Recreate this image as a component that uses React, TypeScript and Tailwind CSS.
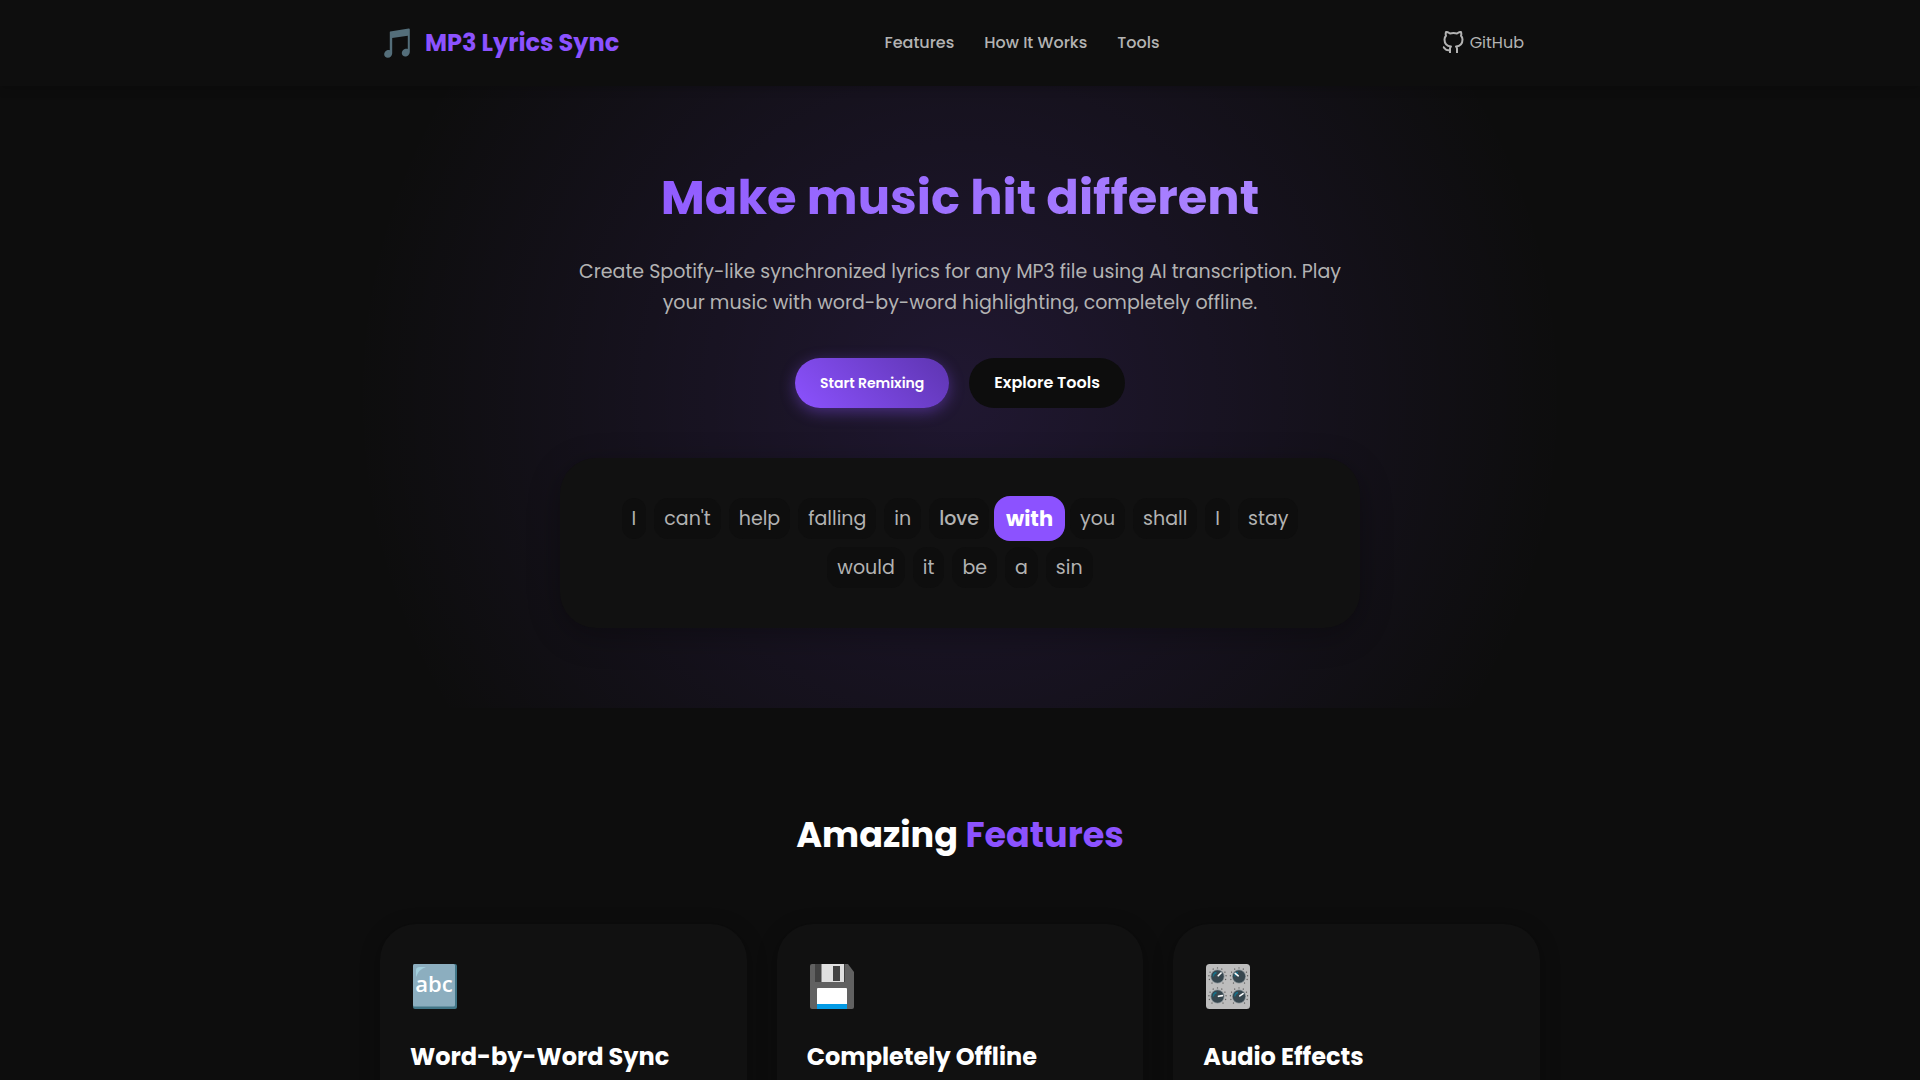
import React from "react";

const navLinks = [
  { label: "Features", href: "#features" },
  { label: "How It Works", href: "#how" },
  { label: "Tools", href: "#tools" },
];

const lyrics = "I can't help falling in love with you shall I stay would it be a sin".split(" ");
const activeWord = 6;

function NoteIcon() {
  return (
    <svg className="h-[30px] w-[30px] shrink-0" viewBox="0 0 30 30" aria-hidden="true">
      <path
        fill="#546e7a"
        d="M10.2 3.4 28.7.4c.7-.1 1.1.3 1.100 1v22.200c0 2.800-1.900 5-4.400 5-2.100 0-3.600-1.400-3.600-3.300 0-2.500 2.100-4.600 4.700-4.600.5 0 .9.1 1.300.2V7.800L12.200 10v15.200c0 2.600-2 4.600-4.400 4.600-2.100 0-3.600-1.300-3.600-3.200 0-2.500 2.100-4.500 4.500-4.500.4 0 .8.1 1.100.2V4.200c0-.4.1-.7.4-.8z"
      />
    </svg>
  );
}

function GitHubIcon() {
  return (
    <svg
      className="h-6 w-6"
      viewBox="0 0 24 24"
      fill="none"
      stroke="currentColor"
      strokeWidth="2"
      strokeLinecap="butt"
      strokeLinejoin="round"
      aria-hidden="true"
    >
      <path d="M9 19c-5 1.500-5-2.500-7-3m14 6v-3.870a3.370 3.370 0 0 0-.94-2.610c3.140-.35 6.440-1.540 6.440-7A5.440 5.440 0 0 0 20 4.770 5.070 5.070 0 0 0 19.910 1S18.730.65 16 2.480a13.380 13.380 0 0 0-7 0C6.270.65 5.090 1 5.090 1A5.070 5.070 0 0 0 5 4.770a5.440 5.440 0 0 0-1.500 3.780c0 5.420 3.300 6.610 6.440 7A3.370 3.370 0 0 0 9 18.130V22" />
    </svg>
  );
}

function AbcIcon() {
  return (
    <svg className="h-[45px] w-[45px]" viewBox="0 0 45 45" aria-hidden="true">
      <rect width="44" height="45" rx="2" fill="#427687" />
      <rect width="42" height="42.500" rx="1.500" fill="#8caebf" />
      <path d="M3 13V6q0-3 4-3h6Q6 5 3 13z" fill="#a2cfdd" />
      <text
        x="21"
        y="28"
        textAnchor="middle"
        fill="#fff"
        fontSize="22"
        fontWeight="600"
        fontFamily="Open Sans, sans-serif"
      >
        abc
      </text>
    </svg>
  );
}

function FloppyIcon() {
  return (
    <svg className="h-[45px] w-[45px]" viewBox="0 0 45 45" aria-hidden="true">
      <path d="M2 0h36l6 8v35q0 2-2 2H2q-2 0-2-2V2q0-2 2-2z" fill="#616161" />
      <path d="M5 0h30v18H5z" fill="#424242" />
      <path d="M11.500 0H34v18H11.500z" fill="#e0e0e0" />
      <path d="M23 2h7v15h-7z" fill="#424242" />
      <path d="M7 25q0-1 1-1h28q1 0 1 1v15H7z" fill="#fff" />
      <path d="M7 40h30v5H7z" fill="#039be5" />
    </svg>
  );
}

const knobs = [
  { x: 11.5, y: 12.5, angle: 45 },
  { x: 33, y: 12.5, angle: -50 },
  { x: 11.5, y: 32.5, angle: 80 },
  { x: 33, y: 32.5, angle: 55 },
];
const ticks = [-140, -110, -85, -60, -30, 0, 30, 60, 85, 110, 140];

function KnobsIcon() {
  return (
    <svg className="h-[45px] w-[45px]" viewBox="0 0 45 45" aria-hidden="true">
      <rect width="44" height="45" rx="3.500" fill="#bdbdbd" />
      {knobs.map((k, i) => (
        <g key={i} transform={`translate(${k.x} ${k.y})`}>
          {ticks.map((t) => (
            <circle key={t} cy="-8.600" r="0.700" fill="#616161" transform={`rotate(${t})`} />
          ))}
          <circle r="7" fill="#8a9499" />
          <circle r="6.200" fill="#37474f" />
          <path d="M-4.200 0A4.200 4.200 0 0 1-1-4" fill="none" stroke="#16718a" strokeWidth="1.300" />
          <path
            d="M0-1v-4"
            stroke="#fff"
            strokeWidth="1.600"
            strokeLinecap="round"
            transform={`rotate(${k.angle})`}
          />
        </g>
      ))}
    </svg>
  );
}

const features = [
  { title: "Word-by-Word Sync", icon: <AbcIcon /> },
  { title: "Completely Offline", icon: <FloppyIcon /> },
  { title: "Audio Effects", icon: <KnobsIcon /> },
];

function Header() {
  return (
    <header className="relative z-10 bg-[#0e0e0e] shadow-[0_2px_10px_rgba(0,0,0,0.2)]">
      <div className="mx-auto flex h-[86px] max-w-[1200px] items-center justify-between px-5">
        <a href="#" className="flex items-center gap-[15px] text-2xl font-bold text-[#8c52ff]">
          <NoteIcon />
          MP3 Lyrics Sync
        </a>
        <nav className="flex gap-[30px] text-base font-medium text-[#b3b3b3]">
          {navLinks.map((link) => (
            <a key={link.label} href={link.href}>
              {link.label}
            </a>
          ))}
        </nav>
        <a href="#github" className="flex items-center gap-[5px] px-4 py-2 text-base text-[#b3b3b3]">
          <GitHubIcon />
          GitHub
        </a>
      </div>
    </header>
  );
}

function Hero() {
  return (
    <section className="bg-[radial-gradient(circle_at_center,rgba(140,82,255,0.15)_0%,transparent_60%)] px-5 py-20 text-center">
      <div className="mx-auto max-w-[800px]">
        <h1 className="bg-linear-135 from-[#8c52ff] to-[#b18cff] bg-clip-text text-5xl leading-[64px] font-bold text-transparent">
          Make music hit different
        </h1>
        <p className="mt-[26px] text-[19px] leading-[31px] text-[#b3b3b3]">
          Create Spotify-like synchronized lyrics for any MP3 file using AI transcription. Play
          your music with word-by-word highlighting, completely offline.
        </p>
        <div className="mt-10 flex justify-center gap-5">
          <button className="h-[50px] rounded-full bg-linear-45 from-[#8c52ff] to-[#5e35b1] px-[25px] text-sm font-semibold text-white shadow-[0_4px_15px_rgba(140,82,255,0.4)]">
            Start Remixing
          </button>
          <button className="h-[50px] rounded-full bg-[#0d0d0d] px-[25px] text-base font-semibold text-white">
            Explore Tools
          </button>
        </div>
        <div className="mt-[50px] flex flex-wrap justify-center gap-2 rounded-[36px] bg-[#111] p-10 shadow-[0_8px_32px_rgba(0,0,0,0.3)]">
          {lyrics.map((word, i) =>
            i === activeWord ? (
              <span
                key={i}
                className="-mx-[3px] -my-0.5 rounded-2xl bg-[#8c52ff] px-3 py-[7px] text-[21px] leading-[31px] font-bold text-white"
              >
                {word}
              </span>
            ) : (
              <span
                key={i}
                className={`rounded-[14px] bg-[#0e0e0e] px-2.5 py-[5px] text-[19px] leading-[31px] text-[#b3b3b3] ${
                  i === activeWord - 1 ? "font-medium" : ""
                }`}
              >
                {word}
              </span>
            )
          )}
        </div>
      </div>
    </section>
  );
}

function Features() {
  return (
    <section id="features" className="mx-auto max-w-[1200px] px-5 pt-[100px]">
      <h2 className="text-center text-[35px] leading-[54px] font-bold text-white">
        Amazing <span className="text-[#8c52ff]">Features</span>
      </h2>
      <div className="mt-[62px] grid grid-cols-3 gap-[30px]">
        {features.map((feature) => (
          <article
            key={feature.title}
            className="rounded-[36px] bg-[#111] px-[30px] py-10 shadow-[0_4px_20px_rgba(0,0,0,0.3)]"
          >
            <div className="pl-[3px]">{feature.icon}</div>
            <h3 className="mt-7 text-2xl leading-[40px] font-bold text-white">{feature.title}</h3>
          </article>
        ))}
      </div>
    </section>
  );
}

export default function App() {
  return (
    <div className="min-h-screen bg-[#0d0d0d] font-[Poppins,Inter,sans-serif]">
      <Header />
      <main>
        <Hero />
        <Features />
      </main>
    </div>
  );
}
